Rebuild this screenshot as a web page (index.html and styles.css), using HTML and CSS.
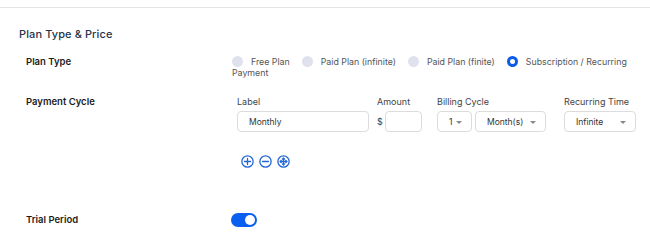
FILE: index.html
```html
<!DOCTYPE html>
<html>
<head>
<meta charset="utf-8">
<link rel="stylesheet" href="styles.css">
</head>
<body>
<div class="topline"></div>
<section class="section">
  <h2 class="title">Plan Type &amp; Price</h2>
  <div class="row row-plan">
    <div class="row-label">Plan Type</div>
    <div class="radios">
      <div class="radio-line">
        <span class="dot"></span><span class="rtext">Free Plan</span>
        <span class="dot"></span><span class="rtext">Paid Plan (infinite)</span>
        <span class="dot"></span><span class="rtext">Paid Plan (finite)</span>
        <span class="dot on"></span><span class="rtext last">Subscription / Recurring</span>
      </div>
      <div class="rtext-wrap">Payment</div>
    </div>
  </div>
  <div class="row row-cycle">
    <div class="row-label">Payment Cycle</div>
    <div class="cycle">
      <div class="fields">
        <div class="field f-label">
          <div class="flabel">Label</div>
          <div class="input w-label">Monthly</div>
        </div>
        <div class="field f-amount">
          <div class="flabel">Amount</div>
          <div class="amount"><span class="dollar">$</span><div class="input w-amount"></div></div>
        </div>
        <div class="field f-billing">
          <div class="flabel">Billing Cycle</div>
          <div class="pair">
            <div class="input select w-one">1<span class="caret"></span></div>
            <div class="input select w-month">Month(s)<span class="caret"></span></div>
          </div>
        </div>
        <div class="field f-rec">
          <div class="flabel">Recurring Time</div>
          <div class="input select w-rec">Infinite<span class="caret"></span></div>
        </div>
      </div>
      <div class="icons">
        <svg class="ico" viewBox="0 0 12 12"><circle cx="6" cy="6" r="5.2"/><path d="M6 3.2v5.6M3.2 6h5.6"/></svg>
        <svg class="ico" viewBox="0 0 12 12"><circle cx="6" cy="6" r="5.2"/><path d="M3.2 6h5.6"/></svg>
        <svg class="ico" viewBox="0 0 12 12"><circle cx="6" cy="6" r="5.2"/><path d="M6 2.8v6.4M2.8 6h6.4M5 3.8L6 2.8L7 3.8M5 8.2L6 9.2L7 8.2M3.8 5L2.8 6L3.8 7M8.2 5L9.2 6L8.2 7"/></svg>
      </div>
    </div>
  </div>
  <div class="row row-trial">
    <div class="row-label">Trial Period</div>
    <div class="toggle"><span class="knob"></span></div>
  </div>
</section>
</body>
</html>
```
FILE: styles.css
```css
html, body { margin: 0; padding: 0; background: #fff; }
body { font-family: Inter, "Noto Sans", sans-serif; color: #333; width: 650px; height: 233px; overflow: hidden; }
.topline { height: 1px; background: #e4e4e4; margin-top: 7px; }
.section { padding: 0 0 0 19px; }
.title { margin: 19px 0 0 0; font-size: 11px; font-weight: 500; color: #27344a; line-height: 14px; letter-spacing: 0.1px; }
.row { display: flex; padding-left: 7px; }
.row-label { width: 206px; flex: none; font-size: 9.5px; font-weight: 600; color: #1c1c1c; line-height: 12px; }
.row-plan { margin-top: 15px; }
.radios { font-size: 8.8px; color: #555; line-height: 11px; }
.radio-line { display: flex; align-items: center; }
.rtext { margin-left: 8px; margin-right: 12px; }
.rtext.last { margin-right: 0; }
.dot { flex: none; width: 11px; height: 11px; border-radius: 50%; background: #dfe1ec; box-sizing: border-box; }
.dot.on { background: #fff; border: 3px solid #0b5ce6; }
.rtext-wrap { margin-top: 0; }
.row-cycle { margin-top: 18px; }
.cycle { display: flex; flex-direction: column; }
.fields { display: flex; padding-left: 5px; }
.field { display: flex; flex-direction: column; }
.flabel { font-size: 9px; color: #444; line-height: 12px; margin-bottom: 3px; }
.f-label { margin-right: 8px; }
.f-amount { margin-right: 15px; }
.f-billing { margin-right: 18px; }
.input { height: 21px; box-sizing: border-box; border: 1px solid #dcdcdc; border-radius: 4px; font-size: 8.5px; color: #333; display: flex; align-items: center; padding-left: 11px; }
.w-label { width: 132px; }
.w-amount { width: 37px; }
.w-one { width: 35px; }
.w-month { width: 71px; margin-left: 3px; }
.w-rec { width: 72px; }
.amount { display: flex; align-items: center; }
.dollar { font-size: 9px; color: #444; width: 8px; }
.pair { display: flex; }
.select { position: relative; }
.caret { position: absolute; right: 9px; top: 9px; width: 0; height: 0; border-left: 3px solid transparent; border-right: 3px solid transparent; border-top: 3px solid #888; }
.icons { display: flex; gap: 5px; margin-top: 23px; padding-left: 9px; }
.ico { width: 13px; height: 13px; fill: none; stroke: #2466d6; stroke-width: 1.2; stroke-linecap: round; stroke-linejoin: round; }
.row-trial { margin-top: 45px; align-items: center; }
.toggle { width: 26px; height: 14px; border-radius: 7px; background: #0b5ff0; margin-left: -1px; display: flex; align-items: center; justify-content: flex-end; padding: 0 2px; box-sizing: border-box; }
.knob { width: 10px; height: 10px; border-radius: 50%; background: #fff; }
```
